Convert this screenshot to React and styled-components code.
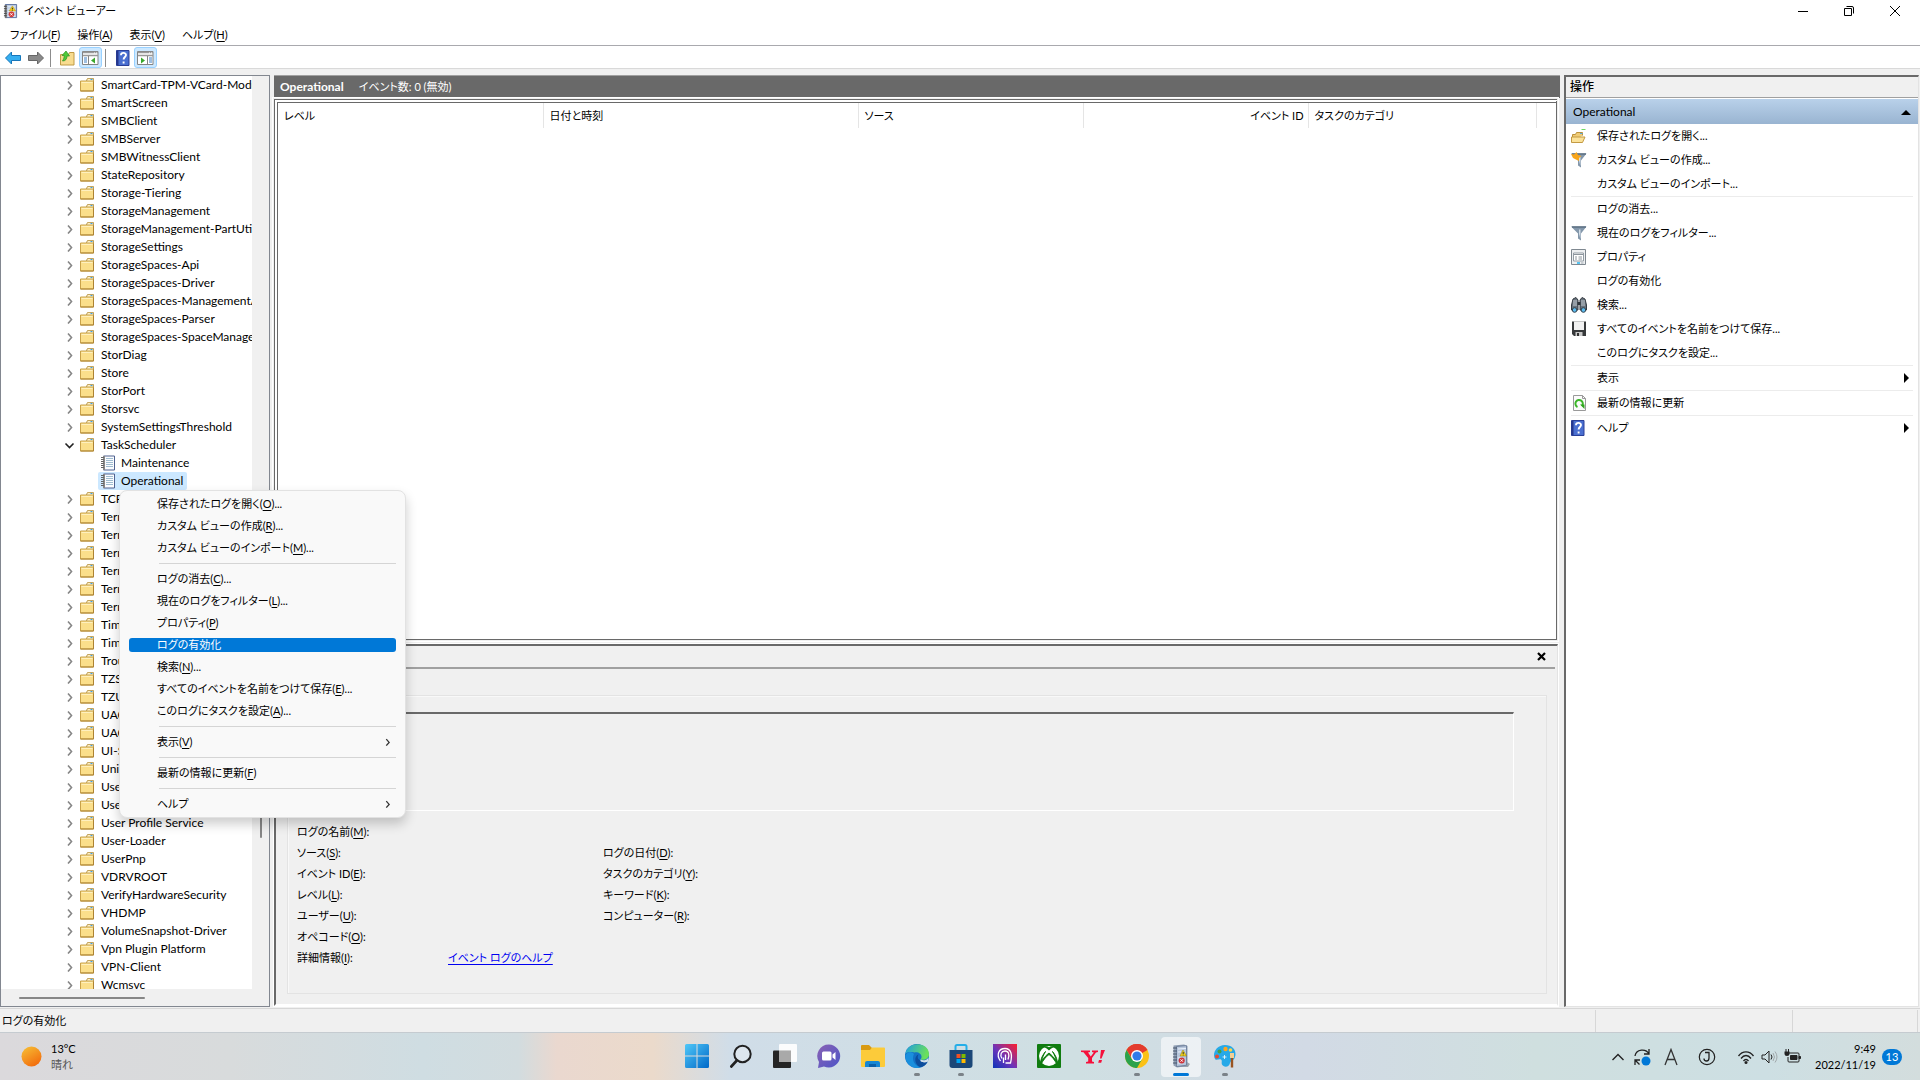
import React from "react";
import styled, { createGlobalStyle, css } from "styled-components";

const GlobalStyle = createGlobalStyle`
  * {
    box-sizing: border-box;
  }
  body {
    margin: 0;
    background: #f0f0f0;
    color: #000;
    font-family: Lato, "Noto Sans CJK JP", sans-serif;
    font-size: 11px;
    line-height: 18px;
    font-feature-settings: "palt";
    overflow: hidden;
  }
  button {
    font: inherit;
    font-feature-settings: inherit;
    color: inherit;
    background: none;
    border: 0;
    padding: 0;
    text-align: left;
    white-space: nowrap;
  }
  ul {
    margin: 0;
    padding: 0;
    list-style: none;
  }
  u {
    text-underline-offset: 2px;
  }
  svg {
    display: block;
    flex: none;
  }
`;

const AppStyle = styled.div`
  display: flex;
  flex-direction: column;
  height: 100vh;
`;

/* ---------- title, menu, toolbar ---------- */

const TitleBarStyle = styled.header`
  display: flex;
  align-items: center;
  gap: 6px;
  height: 22px;
  padding-left: 3px;
  background: #fff;
`;

const WindowButtonsStyle = styled.div`
  display: flex;
  margin-left: auto;
  padding-right: 2px;
`;

const WindowButtonStyle = styled.button`
  display: flex;
  align-items: center;
  justify-content: center;
  width: 46px;
  height: 20px;
`;

const MenuBarStyle = styled.nav`
  display: flex;
  gap: 17px;
  height: 24px;
  padding: 3px 10px 0;
  background: #fff;
  border-bottom: 1px solid #a9a9ae;
`;

const ToolbarStyle = styled.div`
  display: flex;
  align-items: center;
  height: 23px;
  padding: 1px 0 0 1px;
  background: #fff;
  border-bottom: 1px solid #d9d9d9;
`;

const ToolButtonStyle = styled.button`
  display: flex;
  align-items: center;
  justify-content: center;
  width: 23px;
  height: 21px;
  border: 1px solid ${(p) => (p.$on ? "#99d1ff" : "transparent")};
  border-radius: 3px;
  background: ${(p) => (p.$on ? "#cce8ff" : "none")};
`;

const ToolSepStyle = styled.span`
  width: 1px;
  height: 18px;
  margin: 0 5px 0 3px;
  background: #8c8c8c;
`;

/* ---------- three panes ---------- */

const PanesStyle = styled.main`
  flex: 1;
  min-height: 0;
  display: grid;
  grid-template-columns: 270px minmax(0, 1fr) 355px;
  gap: 4px;
  padding: 6px 1px 1px 0;
`;

const TreePaneStyle = styled.section`
  display: grid;
  grid-template-columns: minmax(0, 1fr) 17px;
  grid-template-rows: minmax(0, 1fr) 17px;
  min-height: 0;
  border: 1px solid #828790;
  background: #f0f0f0;
  font-size: 12px;
`;

const TreeStyle = styled.ul`
  overflow: hidden;
  background: #fff;
`;

const TreeItemStyle = styled.li`
  display: flex;
  align-items: center;
  height: 18px;
  padding-left: ${(p) => (p.$child ? 97 : 63)}px;
`;

const TreeButtonStyle = styled.button`
  display: flex;
  align-items: center;
  gap: ${(p) => (p.$child ? 6 : 7)}px;
  height: 18px;
  padding: 0 4px 0 ${(p) => (p.$child ? 3 : 5)}px;
  border-radius: 2px;
  background: ${(p) => (p.$selected ? "#cce8ff" : "none")};
`;

const VScrollStyle = styled.div`
  display: grid;
  grid-template-rows: 683fr 80fr 151fr;
  justify-content: center;
  &::before {
    content: "";
  }
`;

const HScrollStyle = styled.div`
  display: flex;
  align-items: center;
  padding-left: 18px;
`;

const ThumbStyle = styled.span`
  width: ${(p) => (p.$horizontal ? "54%" : "2px")};
  height: ${(p) => (p.$horizontal ? "2px" : "auto")};
  border-radius: 1px;
  background: #868686;
`;

const CenterPaneStyle = styled.section`
  display: flex;
  flex-direction: column;
  min-width: 0;
  min-height: 0;
`;

const LogHeaderStyle = styled.h1`
  display: flex;
  align-items: center;
  gap: 15px;
  height: 23px;
  margin: 0 0 1px;
  padding: 0 6px;
  border-top: 1px solid #a0a0a0;
  background: #696969;
  color: #fff;
  font-size: 12px;
  font-weight: 700;
  span {
    font-size: 11px;
    font-weight: 400;
  }
`;

const ListFrameStyle = styled.div`
  flex: 546;
  min-height: 0;
  margin-right: 3px;
  border: 4px double #696969;
  border-right: 1px solid #696969;
  border-bottom: 1px solid #696969;
  background: #fff;
  outline: 1px solid #fff;
  outline-offset: 1px;
`;

const EventTableStyle = styled.table`
  width: 100%;
  table-layout: fixed;
  border-collapse: collapse;
`;

const ColumnHeadStyle = styled.th`
  height: 25px;
  padding: 1px 4px 0 6px;
  border-right: 1px solid #e5e5e5;
  font-weight: 400;
  text-align: ${(p) => (p.$right ? "right" : "left")};
  white-space: nowrap;
  &:last-child {
    border: 0;
  }
`;

const PreviewStyle = styled.div`
  flex: 354;
  min-height: 0;
  display: flex;
  flex-direction: column;
  margin: 4px 2px 1px 0;
  padding: 0 2px 10px 0;
  border: 2px solid;
  border-color: #696969 #e3e3e3 #fff #696969;
  border-right-width: 1px;
  outline: 1px solid #fff;
`;

const PreviewHeadStyle = styled.div`
  display: flex;
  align-items: center;
  justify-content: flex-end;
  height: 23px;
  margin-bottom: 26px;
  padding-right: 9px;
  border-bottom: 2px solid #a0a0a0;
`;

const GroupStyle = styled.div`
  flex: 1;
  min-height: 0;
  margin: 0 8px 0 11px;
  padding: 16px 32px 0 9px;
  border: 1px solid #e3e3e3;
  box-shadow: inset 1px 1px #f8f8f8;
`;

const DescriptionStyle = styled.textarea`
  display: block;
  width: 100%;
  height: 99px;
  margin-bottom: 10px;
  resize: none;
  background: #f0f0f0;
  border: 1px solid;
  border-color: #696969 #fff #fff #696969;
  border-top-width: 2px;
`;

const FieldsStyle = styled.div`
  display: grid;
  grid-template-columns: 151px 155px 1fr;
  grid-auto-rows: 21px;
  align-items: center;
  a {
    color: #0000f0;
    text-underline-offset: 2px;
  }
`;

const ActionsPaneStyle = styled.aside`
  min-height: 0;
  border: 1px solid;
  border-width: 2px 1px 1px 2px;
  border-color: #696969 #e3e3e3 #e3e3e3 #696969;
  background: #fff;
`;

const ActionsTitleStyle = styled.h2`
  height: 21px;
  margin: 0 0 1px;
  padding: 0 4px;
  border-bottom: 1px solid #a0a0a0;
  background: #f0f0f0;
  font-size: 12px;
  line-height: 20px;
  font-weight: 500;
`;

const ActionsHeadStyle = styled.button`
  display: flex;
  align-items: center;
  justify-content: space-between;
  width: 100%;
  height: 25px;
  padding: 0 7px;
  background: linear-gradient(#b9d1ea, #99b4d1);
  font-size: 12px;
`;

const ActionStyle = styled.li`
  border-top: ${(p) => (p.$sep ? "1px solid #ececec" : "0")};
  margin: 0 5px;
  button {
    display: grid;
    grid-template-columns: 16px 1fr auto;
    gap: 10px;
    align-items: center;
    width: 100%;
    height: 24px;
    padding-right: 3px;
  }
`;

/* ---------- context menu ---------- */

const ContextMenuStyle = styled.ul`
  position: absolute;
  left: 119px;
  top: 490px;
  width: 287px;
  padding: 2px 9px 2px 9px;
  border: 1px solid #e2e2e2;
  border-radius: 8px;
  background: #f9f9f9;
  box-shadow: 0 6px 12px rgba(0, 0, 0, 0.2);
`;

const ContextItemStyle = styled.li`
  button {
    display: flex;
    align-items: center;
    justify-content: space-between;
    width: 100%;
    height: ${(p) => (p.$active ? 14 : 22)}px;
    margin: ${(p) => (p.$active ? 4 : 0)}px 0;
    padding: 0 4px 0 28px;
    border-radius: 3px;
    ${(p) =>
      p.$active &&
      css`
        background: #0078d7;
        color: #fff;
      `}
  }
`;

const ContextSepStyle = styled.li`
  height: 1px;
  margin: 4px 0 4px 30px;
  background: #d5d5d5;
`;

/* ---------- status bar, taskbar ---------- */

const StatusStyle = styled.footer`
  display: grid;
  grid-template-columns: 1fr 197px 125px 2px;
  height: 24px;
  padding: 1px 0;
  border-top: 1px solid #d7d7d7;
  span {
    padding: 2px;
    border-right: 1px solid #d7d7d7;
  }
  span:last-child {
    border: 0;
  }
`;

const TaskbarStyle = styled.div`
  display: grid;
  grid-template-columns: 1fr auto 1fr;
  align-items: center;
  height: 48px;
  border-top: 1px solid #c5cbd0;
  background: linear-gradient(
    90deg,
    #dbd9dc 0%,
    #d8dbdc 12%,
    #cfdde2 22%,
    #d2dcdf 27%,
    #ead8cf 29%,
    #ebdacb 34%,
    #d0dde8 38%,
    #cfdfe2 56%,
    #d2dae5 68%,
    #cfdfdf 80%,
    #cddfe3 92%,
    #d3dddd 100%
  );
`;

const WeatherStyle = styled.button`
  display: flex;
  align-items: center;
  gap: 9px;
  padding-left: 21px;
  line-height: 16px;
  span span {
    display: block;
    color: #555;
  }
`;

const AppsStyle = styled.div`
  display: flex;
  gap: 4px;
  padding-left: 1px;
`;

const AppButtonStyle = styled.button`
  display: flex;
  flex-direction: column;
  align-items: center;
  width: 40px;
  height: 40px;
  padding-top: 7px;
  border-radius: 4px;
  background: ${(p) => (p.$active ? "rgba(255, 255, 255, 0.6)" : "none")};
  &::after {
    content: "";
    width: ${(p) => (p.$active ? 16 : 6)}px;
    height: 3px;
    margin-top: 5px;
    border-radius: 2px;
    background: ${(p) =>
      p.$active ? "#0078d7" : p.$open ? "#7b8288" : "transparent"};
  }
`;

const TrayStyle = styled.div`
  display: flex;
  align-items: center;
  justify-content: flex-end;
  gap: 8px;
  padding-right: 18px;
`;

const TrayGroupStyle = styled.div`
  display: flex;
  gap: 6px;
`;

const ClockStyle = styled.time`
  margin-left: 6px;
  line-height: 16px;
  text-align: right;
  span {
    display: block;
  }
`;

const BadgeStyle = styled.span`
  min-width: 20px;
  height: 16px;
  margin-left: -2px;
  border-radius: 8px;
  background: #0078d7;
  color: #fff;
  line-height: 16px;
  text-align: center;
`;

/* ---------- icons ---------- */

const Svg = ({ w = 16, h = 16, box, children }) => (
  <svg width={w} height={h} viewBox={box || `0 0 ${w} ${h}`} fill="none" aria-hidden="true">
    {children}
  </svg>
);

const ViewerIcon = ({ size = 16 }) => (
  <Svg w={size} h={size} box="0 0 16 16">
    <path d="M2.5 .5h12v14h-12z" fill="#b9c9e0" stroke="#5a6fa0" />
    <path d="M5 3h8M5 5.5h8M5 8h8M5 10.500h8M5 13h8" stroke="#eaf1fa" />
    <path d="M3 1v14" stroke="#777" strokeWidth="2" />
    <path d="M1 2.500h3M1 5h3M1 7.500h3M1 10h3M1 12.500h3" stroke="#444" />
    <path d="M10 2l3.500 5.500h-7z" fill="#f7d31e" stroke="#b58b00" strokeWidth=".5" />
    <path d="M10 4v1.700M10 6.200v.8" stroke="#222" />
    <circle cx="9" cy="11" r="3" fill="#d23b3b" />
    <path d="M7.800 9.800l2.400 2.400m0-2.400l-2.400 2.400" stroke="#fff" />
  </Svg>
);

const FolderIcon = () => (
  <Svg w={14} h={15}>
    <path d="M.5 3h6l1-2h6v12H.5z" fill="#fbdf8b" stroke="#c9a24b" />
    <path d="M7.500 .5h6v2.500H6.500z" fill="#fff1c4" stroke="#b8954a" strokeWidth=".8" />
    <path d="M10.500 1h2v1h-2z" fill="#3f9fe0" />
    <path d="M1.500 4.500h11" stroke="#fff0bf" />
    <path d="M.5 13h13V3.500" stroke="#ad8333" />
  </Svg>
);

const LogIcon = () => (
  <Svg w={14} h={16}>
    <path d="M2.500 1h11v14h-11z" fill="#fafcff" stroke="#4f618f" />
    <path d="M5 3.500h7M5 5.500h7M5 7.500h7M5 9.500h7M5 11.500h7" stroke="#9fbccf" />
    <path d="M3 1v14" stroke="#888" strokeWidth="2" />
    <path d="M0 2.500h3M0 4.500h3M0 6.500h3M0 8.500h3M0 10.500h3M0 12.500h3" stroke="#666" />
  </Svg>
);

const Chevron = ({ dir = "right", color = "#868686", size = 5 }) => (
  <Svg w={size * 2 + 1} h={10} box="0 0 11 10">
    <path
      d={dir === "right" ? "M4 1.500l3.500 4L4 9.500" : "M1.500 3.500l4 4 4-4"}
      stroke={color}
      strokeWidth="1.600"
    />
  </Svg>
);

const HelpIcon = () => (
  <Svg w={14} h={16}>
    <path d="M.5 .5h12.500v15H.5z" fill="#4a6fd0" stroke="#2a3f98" />
    <path d="M1.500 1v14" stroke="#25378c" strokeWidth="2" />
    <path
      d="M5 5.200c0-3 5-3 5-.2 0 2-2.400 2-2.400 4.500M7.600 11.500v2"
      stroke="#fff"
      strokeWidth="1.900"
    />
  </Svg>
);

const Arrow = ({ flip, fill, stroke }) => (
  <Svg w={16} h={14}>
    <path
      d={flip ? "M15.500 7L9.500 1v3.500H.5v5h9V13z" : "M.5 7l6-6v3.500h9v5h-9V13z"}
      fill={fill}
      stroke={stroke}
    />
  </Svg>
);

const UpFolderIcon = () => (
  <Svg w={15} h={16}>
    <path d="M.5 4.500h8l1-2h4.500v12.500H.5z" fill="#f8dc90" stroke="#c09a45" />
    <path
      d="M2.500 11c3 0 4.500-2 4.500-5H9.500L6 1 2 5.500h2.200c0 2-.5 3.500-1.700 5.500z"
      fill="#4fca3a"
      stroke="#2c8f21"
      strokeWidth=".7"
    />
  </Svg>
);

const PaneIcon = ({ right }) => (
  <Svg w={17} h={14}>
    <path d="M.5 .5h15.500v13H.5z" fill="#fff" stroke="#848484" />
    <path d="M1 1.500h15M1 4.500h15" stroke="#999" strokeWidth="1.500" />
    <path d="M12 2h1M14 2h1" stroke="#fff" />
    {right ? (
      <>
        <path d="M10.500 5v8" stroke="#848484" />
        <path d="M12 7h3M12 9h3M12 11h3" stroke="#3f7ec2" />
        <path d="M4 6.500l4 3-4 3z" fill="#38a82c" />
      </>
    ) : (
      <>
        <path d="M6.500 5v8" stroke="#848484" />
        <path d="M2 7h3M2 9h3M2 11h3" stroke="#3f7ec2" />
        <path d="M13 6.500l-4 3 4 3z" fill="#38a82c" />
      </>
    )}
  </Svg>
);

const FunnelIcon = ({ star }) => (
  <Svg>
    <path d="M0 1.500h15.500L10 8.500v7l-3-2V8.500z" fill="#8397ab" />
    <path d="M1 2h14" stroke="#5d7183" strokeWidth="1.500" />
    <path d="M8 9V4.500h1.500V14z" fill="#d3dee8" />
    {star && <path d="M0 2l3 .5L5.500 0 7 3l3.500 1L8 6v3L5 7.500 2 6z" fill="#f8a51b" />}
  </Svg>
);

const OpenFolderIcon = () => (
  <Svg>
    <path d="M1.500 14V6.500h3l1-2h6v3" fill="#f0cc76" stroke="#bb913b" />
    <path d="M.5 14.500V9l2.500 0h11l-2.500 5.500z" fill="#fbe29a" stroke="#c39a43" />
    <path d="M10.500 1.500h4" stroke="#6fda64" />
    <path d="M9 5.500h2.500" stroke="#58a6d8" />
  </Svg>
);

const PropertiesIcon = () => (
  <Svg>
    <path d="M.5 .5h14v15H.5z" fill="#eef0f2" stroke="#7f8890" />
    <path d="M2.500 4h10v8h-10z" fill="#fff" stroke="#939ca4" />
    <path d="M3 5.500h9M4 8h2M7.500 8h3.500M4 10h2M7.500 10h3.500" stroke="#8b949c" />
    <path d="M6 14h3" stroke="#26b4ef" strokeWidth="1.500" />
    <path d="M10 14h2.500" stroke="#a3abb2" />
  </Svg>
);

const BinocularsIcon = () => (
  <Svg>
    <path d="M2 2l3-1.500L7 3v10H.5V8zM14 2l-3-1.500L9 3v10h6.500V8z" fill="#68727c" stroke="#343b42" />
    <path d="M3 3v6M5 3v6M11 3v6M13 3v6" stroke="#c3cbd2" />
    <path d="M6.500 5h3v3h-3z" fill="#2f363d" />
    <circle cx="3.600" cy="13" r="2.300" fill="#5bbcf0" stroke="#33424e" />
    <circle cx="12.400" cy="13" r="2.300" fill="#5bbcf0" stroke="#33424e" />
  </Svg>
);

const DiskIcon = () => (
  <Svg>
    <path d="M1 .5h14V15H3l-2-2z" fill="#37393b" />
    <path d="M3 .5h10V9H3z" fill="#f2f2f2" />
    <path d="M4.500 11h7v4h-7z" fill="#c8c8c8" />
    <path d="M6 12h2v3H6z" fill="#333" />
  </Svg>
);

const RefreshIcon = () => (
  <Svg>
    <path d="M2.500 .5h9l3 3v12h-12z" fill="#fbfbfb" stroke="#999" />
    <path d="M11.500 .5v3h3" stroke="#999" />
    <path d="M6.500 12A3.700 3.700 0 1 1 11 11" stroke="#3cb629" strokeWidth="2" />
    <path d="M9 9.500h4.500V14z" fill="#2fa31e" />
  </Svg>
);

const Triangle = ({ up }) => (
  <Svg w={up ? 10 : 6} h={up ? 6 : 10}>
    <path d={up ? "M0 6l5-5 5 5z" : "M0 0l5 5-5 5z"} fill="#000" />
  </Svg>
);

const StartIcon = () => (
  <Svg w={24} h={24}>
    <defs>
      <linearGradient id="start" x1="0" y1="0" x2="1" y2="1">
        <stop stopColor="#50c8f8" />
        <stop offset="1" stopColor="#0068c8" />
      </linearGradient>
    </defs>
    <path
      d="M1.500 0H11.500V11.500H0V1.500Q0 0 1.500 0zM12.500 0h10Q24 0 24 1.500v10H12.500zM0 12.500h11.500V24h-10Q0 24 0 22.500zM12.500 12.500H24v10Q24 24 22.500 24h-10z"
      fill="url(#start)"
    />
  </Svg>
);

const SearchIcon = () => (
  <Svg w={24} h={24}>
    <circle cx="13.500" cy="10" r="8.200" stroke="#222" strokeWidth="2" fill="#e6edf2" fillOpacity=".6" />
    <path d="M7.800 16.500l-5.500 6" stroke="#222" strokeWidth="2.600" strokeLinecap="round" />
  </Svg>
);

const TaskViewIcon = () => (
  <Svg w={24} h={24}>
    <rect x="0" y="6.500" width="18" height="17.500" rx="1" fill="#252525" />
    <rect x="6" y="0" width="18" height="18" rx="1" fill="#fff" fillOpacity=".9" />
    <path d="M6 6.500h12V18H6z" fill="#a9a9a9" />
  </Svg>
);

const ChatIcon = () => (
  <Svg w={24} h={24}>
    <defs>
      <linearGradient id="chat" x1="0" y1="0" x2="1" y2="1">
        <stop stopColor="#8a62b4" />
        <stop offset="1" stopColor="#4d55c8" />
      </linearGradient>
    </defs>
    <path d="M12 .5A11.500 11.500 0 1 1 7 22.500L1 24l1-6A11.500 11.500 0 0 1 12 .5z" fill="url(#chat)" />
    <rect x="5" y="7.500" width="9.500" height="9" rx="1.500" fill="#fff" />
    <path d="M15.500 10.500l3-2.500v8l-3-2.500z" fill="#fff" />
  </Svg>
);

const ExplorerIcon = () => (
  <Svg w={24} h={24}>
    <path d="M0 2Q0 1 1 1h7l3 3v4H0z" fill="#d99a12" />
    <path d="M0 6h9l2-2.500h12q1 0 1 1V22q0 1-1 1H1q-1 0-1-1z" fill="#fccb3a" />
    <path d="M4 23v-4q0-2 2-2h11q2 0 2 2v4z" fill="#1687d4" />
    <path d="M8 20h7v3H8z" fill="#0a5fa8" />
  </Svg>
);

const EdgeIcon = () => (
  <Svg w={24} h={24}>
    <defs>
      <linearGradient id="edge" x1="0" y1="0" x2="1" y2=".3">
        <stop stopColor="#1d9de2" />
        <stop offset="1" stopColor="#6be05a" />
      </linearGradient>
    </defs>
    <circle cx="12" cy="12" r="12" fill="#1270c4" />
    <path d="M.3 10C2-3 24-3 24 10.500c0 4-4 6-8.500 5 3-3.500-1-8-6-7C5 7.500 2 8 .3 10z" fill="url(#edge)" />
    <path d="M9 10c-3 6 1 12 7 13.500-9 2-16-4-15.700-12C3 6.500 7 7.500 9 10z" fill="#1a8fdd" />
    <path d="M13.500 10.500c-2 3.500 0 7.500 7.500 6.500l1.500 1C21 21 18 23 15 23c-6-3-6-11-1.500-12.500z" fill="#0c4d9d" />
    <path d="M15.500 15.500c2.500 1.500 6 1 8-2l-.5 4c-4 2-8.500.5-7.500-2z" fill="#d4e0e8" />
  </Svg>
);

const StoreIcon = () => (
  <Svg w={24} h={24}>
    <path d="M6.500 6V2.500Q6.500 1 8 1h8q1.500 0 1.500 1.500V6" stroke="#25aee8" strokeWidth="2" />
    <path d="M.5 6h23v15q0 3-3 3h-17q-3 0-3-3z" fill="#1b4778" />
    <path d="M7.500 10h4v4h-4z" fill="#f25022" />
    <path d="M12.500 10h4v4h-4z" fill="#7fba00" />
    <path d="M7.500 15h4v4h-4z" fill="#00a4ef" />
    <path d="M12.500 15h4v4h-4z" fill="#ffb900" />
  </Svg>
);

const HeadIcon = () => (
  <Svg w={24} h={24}>
    <defs>
      <linearGradient id="head" x1="0" y1="1" x2="1" y2="0">
        <stop stopColor="#0b34b8" />
        <stop offset=".45" stopColor="#6b35bb" />
        <stop offset="1" stopColor="#ff1f2d" />
      </linearGradient>
    </defs>
    <path d="M0 0h24v24H0z" fill="url(#head)" />
    <path
      d="M7.500 17C3 11 5.500 4.500 12 4.500S19.500 11 17.500 19h-5M9 14.500C6.500 10.500 8.500 7 12 7s5 3.500 3 8.500M10.500 19v-5.500M12.500 16v-5.500"
      stroke="#fff"
      strokeWidth="1.300"
    />
  </Svg>
);

const XboxIcon = () => (
  <Svg w={24} h={24}>
    <rect width="24" height="24" rx="1" fill="#107c10" />
    <circle cx="12" cy="12" r="10" fill="#fff" />
    <path d="M12 6.500C9 3.500 7 3 5 3.500 8 1.500 10 2 12 3.200 14 2 16 1.500 19 3.500 17 3 15 3.500 12 6.500z" fill="#107c10" />
    <path
      d="M8.500 7.500C4.500 12.500 3 17 4.500 19.500 6 16.500 9 12.500 12 10.500c3 2 6 6 7.500 9 1.500-2.500 0-7-4-12 3 5 3.500 8 3.500 9-2-3-4.500-5.500-7-7.500-2.500 2-5 4.500-7 7.500 0-1 .5-4 3.500-9z"
      fill="#107c10"
      stroke="#107c10"
    />
  </Svg>
);

const YahooIcon = () => (
  <Svg w={24} h={24}>
    <path
      d="M0 6.500h9v1.500l-2 .4 2.800 4.200 3-4-1.800-.6V6.500h6V8l-2 .5-4 5.500v3.500l2 .5v1.500H5V18l2.200-.5V14L2.500 8.300 0 8zM20 6h4l-3.500 8.500h-1.500zM18 16h3l-.8 2.800h-3z"
      fill="#f5103b"
    />
  </Svg>
);

const ChromeIcon = () => (
  <Svg w={24} h={24}>
    <circle cx="12" cy="12" r="12" fill="#fbc116" />
    <path d="M12 12L1.600 6A12 12 0 0 1 22.400 6z" fill="#e33b2e" />
    <path d="M12 6h10.400A12 12 0 0 0 1.600 6L7 15z" fill="#e33b2e" />
    <path d="M1.600 6L6.800 15 12 18l-.5 6A12 12 0 0 1 1.600 6z" fill="#2ba24c" />
    <path d="M17.200 15L12 24a12 12 0 0 1-2-.2L12 17z" fill="#2ba24c" />
    <circle cx="12" cy="12" r="6" fill="#fff" />
    <circle cx="12" cy="12" r="4.600" fill="#2f7bea" />
  </Svg>
);

const ViewerAppIcon = () => (
  <Svg w={24} h={24}>
    <path d="M6 23l13 0 2-3-3-2z" fill="#9ea4aa" />
    <path d="M4.500 1.500L15 .5l3.500 1.500V22l-10.500 1.500-3.500-2z" fill="#8e9db2" />
    <path d="M7.500 2.500l10-.8v19.500l-10 1.300z" fill="#b8c7dc" stroke="#5f718e" strokeWidth=".7" />
    <path d="M9 5l8-.6M9 8l3-.2M9 14l4-.2M9 19l4-.2" stroke="#eaf1fa" />
    <path d="M4 4h4M4 7h4M4 10h4M4 13h4M4 16h4M4 19h4" stroke="#48566c" />
    <path d="M14 6l3.500 6h-6.500z" fill="#f4d41b" stroke="#9b7d00" strokeWidth=".5" />
    <path d="M14.200 8v2M14.200 10.600v.8" stroke="#333" />
    <circle cx="12.700" cy="16.500" r="3" fill="#cf3338" />
    <path d="M11.500 15.300l2.400 2.400m0-2.400l-2.400 2.400" stroke="#fff" />
  </Svg>
);

const PaintIcon = () => (
  <Svg w={24} h={24}>
    <path
      d="M2 15C-1 10 3 1 12 1c8 0 12 6 10 12-1 4-4 3-5 6-.5 3-4 5-6.500 3C7 20 10 17 8 15.500 6 14.500 3.500 17 2 15z"
      fill="#27a9e8"
    />
    <circle cx="12.500" cy="5" r="2.200" fill="#ffa51f" />
    <circle cx="6.500" cy="7.500" r="2" fill="#43a047" />
    <circle cx="4" cy="12.500" r="2" fill="#e54b2e" />
    <circle cx="17.500" cy="6" r="1.800" fill="#fcd54a" />
    <path d="M17 9h4v5h-4z" fill="#f1cf95" />
    <path d="M17.800 14h2.400v9.500h-2.400z" fill="#995421" />
    <path d="M11.500 11v4M9.500 13h4" stroke="#fff" strokeWidth=".8" />
  </Svg>
);

const SunIcon = () => (
  <Svg w={21} h={21}>
    <defs>
      <linearGradient id="sun" x1=".2" y1="0" x2=".8" y2="1">
        <stop stopColor="#f6bb33" />
        <stop offset="1" stopColor="#f2670b" />
      </linearGradient>
    </defs>
    <circle cx="10.500" cy="10.500" r="10" fill="url(#sun)" />
  </Svg>
);

/* ---------- data ---------- */

const TREE_ITEMS = [
  "SmartCard-TPM-VCard-Module",
  "SmartScreen",
  "SMBClient",
  "SMBServer",
  "SMBWitnessClient",
  "StateRepository",
  "Storage-Tiering",
  "StorageManagement",
  "StorageManagement-PartUtil",
  "StorageSettings",
  "StorageSpaces-Api",
  "StorageSpaces-Driver",
  "StorageSpaces-ManagementAgent",
  "StorageSpaces-Parser",
  "StorageSpaces-SpaceManager",
  "StorDiag",
  "Store",
  "StorPort",
  "Storsvc",
  "SystemSettingsThreshold",
  { name: "TaskScheduler", open: true },
  { name: "Maintenance", child: true },
  { name: "Operational", child: true, selected: true },
  "TCPIP",
  "TerminalServices-ClientActiveXCore",
  "TerminalServices-ClientUSBDevices",
  "TerminalServices-LocalSessionManager",
  "TerminalServices-PnPDevices",
  "TerminalServices-Printers",
  "TerminalServices-RemoteConnectionManager",
  "Time-Service",
  "Time-Service-PTP-Provider",
  "Troubleshooting-Recommended",
  "TZSync",
  "TZUtil",
  "UAC",
  "UAC-FileVirtualization",
  "UI-Search",
  "UniversalTelemetryClient",
  "User Control Panel",
  "User Device Registration",
  "User Profile Service",
  "User-Loader",
  "UserPnp",
  "VDRVROOT",
  "VerifyHardwareSecurity",
  "VHDMP",
  "VolumeSnapshot-Driver",
  "Vpn Plugin Platform",
  "VPN-Client",
  "Wcmsvc",
].map((item) => (typeof item === "string" ? { name: item } : item));

const MENUS = [
  ["ファイル", "F"],
  ["操作", "A"],
  ["表示", "V"],
  ["ヘルプ", "H"],
];

const COLUMNS = [
  { name: "レベル", width: 265 },
  { name: "日付と時刻", width: 315 },
  { name: "ソース", width: 225 },
  { name: "イベント ID", width: 225, right: true },
  { name: "タスクのカテゴリ", width: 228 },
  { name: "" },
];

const ACTIONS = [
  { name: "保存されたログを開く...", icon: <OpenFolderIcon /> },
  { name: "カスタム ビューの作成...", icon: <FunnelIcon star /> },
  { name: "カスタム ビューのインポート..." },
  { name: "ログの消去...", sep: true },
  { name: "現在のログをフィルター...", icon: <FunnelIcon /> },
  { name: "プロパティ", icon: <PropertiesIcon /> },
  { name: "ログの有効化" },
  { name: "検索...", icon: <BinocularsIcon /> },
  { name: "すべてのイベントを名前をつけて保存...", icon: <DiskIcon /> },
  { name: "このログにタスクを設定..." },
  { name: "表示", sep: true, more: true },
  { name: "最新の情報に更新", sep: true, icon: <RefreshIcon /> },
  { name: "ヘルプ", sep: true, more: true, icon: <HelpIcon /> },
];

const CONTEXT_ITEMS = [
  { name: "保存されたログを開く", hotkey: "O", dots: true },
  { name: "カスタム ビューの作成", hotkey: "R", dots: true },
  { name: "カスタム ビューのインポート", hotkey: "M", dots: true },
  { sep: true },
  { name: "ログの消去", hotkey: "C", dots: true },
  { name: "現在のログをフィルター", hotkey: "L", dots: true },
  { name: "プロパティ", hotkey: "P" },
  { name: "ログの有効化", active: true },
  { name: "検索", hotkey: "N", dots: true },
  { name: "すべてのイベントを名前をつけて保存", hotkey: "E", dots: true },
  { name: "このログにタスクを設定", hotkey: "A", dots: true },
  { sep: true },
  { name: "表示", hotkey: "V", more: true },
  { sep: true },
  { name: "最新の情報に更新", hotkey: "F" },
  { sep: true },
  { name: "ヘルプ", more: true },
];

const FIELDS = [
  [["ログの名前", "M"]],
  [["ソース", "S"], ["ログの日付", "D"]],
  [["イベント ID", "E"], ["タスクのカテゴリ", "Y"]],
  [["レベル", "L"], ["キーワード", "K"]],
  [["ユーザー", "U"], ["コンピューター", "R"]],
  [["オペコード", "O"]],
  [["詳細情報", "I"]],
];

const APPS = [
  { name: "スタート", icon: <StartIcon /> },
  { name: "検索", icon: <SearchIcon /> },
  { name: "タスク ビュー", icon: <TaskViewIcon /> },
  { name: "チャット", icon: <ChatIcon /> },
  { name: "エクスプローラー", icon: <ExplorerIcon /> },
  { name: "Edge", icon: <EdgeIcon />, open: true },
  { name: "Store", icon: <StoreIcon />, open: true },
  { name: "アシスタント", icon: <HeadIcon /> },
  { name: "Xbox", icon: <XboxIcon /> },
  { name: "Yahoo", icon: <YahooIcon /> },
  { name: "Chrome", icon: <ChromeIcon />, open: true },
  { name: "イベント ビューアー", icon: <ViewerAppIcon />, active: true },
  { name: "ペイント", icon: <PaintIcon />, open: true },
];

/* ---------- components ---------- */

const HotLabel = ({ name, hotkey, after }) => (
  <span>
    {name}
    {hotkey && (
      <>
        (<u>{hotkey}</u>)
      </>
    )}
    {after}
  </span>
);

const TopBars = () => (
  <>
    <TitleBarStyle>
      <ViewerIcon size={15} />
      <span>イベント ビューアー</span>
      <WindowButtonsStyle>
        <WindowButtonStyle aria-label="最小化">
          <Svg w={10} h={10}>
            <path d="M0 5.500h10" stroke="#000" />
          </Svg>
        </WindowButtonStyle>
        <WindowButtonStyle aria-label="元に戻す">
          <Svg w={10} h={10}>
            <path d="M.5 2.500h7v7h-7zM2.500 .5H8q1.500 0 1.500 1.500v5.500" stroke="#000" />
          </Svg>
        </WindowButtonStyle>
        <WindowButtonStyle aria-label="閉じる">
          <Svg w={10} h={10}>
            <path d="M0 0l10 10M10 0L0 10" stroke="#000" />
          </Svg>
        </WindowButtonStyle>
      </WindowButtonsStyle>
    </TitleBarStyle>
    <MenuBarStyle>
      {MENUS.map(([name, hotkey]) => (
        <button key={hotkey}>
          <HotLabel name={name} hotkey={hotkey} />
        </button>
      ))}
    </MenuBarStyle>
    <ToolbarStyle>
      <ToolButtonStyle aria-label="戻る">
        <Arrow fill="#35aef0" stroke="#1676ba" />
      </ToolButtonStyle>
      <ToolButtonStyle aria-label="進む">
        <Arrow flip fill="#8a8a8a" stroke="#666" />
      </ToolButtonStyle>
      <ToolSepStyle />
      <ToolButtonStyle aria-label="上へ">
        <UpFolderIcon />
      </ToolButtonStyle>
      <ToolButtonStyle $on aria-label="ツリーの表示">
        <PaneIcon />
      </ToolButtonStyle>
      <ToolSepStyle />
      <ToolButtonStyle aria-label="ヘルプ">
        <HelpIcon />
      </ToolButtonStyle>
      <ToolButtonStyle $on aria-label="操作ウィンドウの表示">
        <PaneIcon right />
      </ToolButtonStyle>
    </ToolbarStyle>
  </>
);

const TreePane = () => (
  <TreePaneStyle>
    <TreeStyle>
      {TREE_ITEMS.map((item) => (
        <TreeItemStyle key={item.name} $child={item.child}>
          {!item.child && (
            <Chevron dir={item.open ? "down" : "right"} color={item.open ? "#222" : undefined} />
          )}
          <TreeButtonStyle $child={item.child} $selected={item.selected}>
            {item.child ? <LogIcon /> : <FolderIcon />}
            {item.name}
          </TreeButtonStyle>
        </TreeItemStyle>
      ))}
    </TreeStyle>
    <VScrollStyle>
      <ThumbStyle />
    </VScrollStyle>
    <HScrollStyle>
      <ThumbStyle $horizontal />
    </HScrollStyle>
  </TreePaneStyle>
);

const CenterPane = () => (
  <CenterPaneStyle>
    <LogHeaderStyle>
      Operational <span>イベント数: 0 (無効)</span>
    </LogHeaderStyle>
    <ListFrameStyle>
      <EventTableStyle>
        <colgroup>
          {COLUMNS.map((col) => (
            <col key={col.name} width={col.width} />
          ))}
        </colgroup>
        <thead>
          <tr>
            {COLUMNS.map((col) => (
              <ColumnHeadStyle key={col.name} $right={col.right}>
                {col.name}
              </ColumnHeadStyle>
            ))}
          </tr>
        </thead>
      </EventTableStyle>
    </ListFrameStyle>
    <PreviewStyle>
      <PreviewHeadStyle>
        <button aria-label="プレビューを閉じる">
          <Svg w={9} h={9}>
            <path d="M1 1l7 7M8 1L1 8" stroke="#000" strokeWidth="2.200" />
          </Svg>
        </button>
      </PreviewHeadStyle>
      <GroupStyle>
        <DescriptionStyle readOnly aria-label="説明" />
        <FieldsStyle>
          {FIELDS.map(([[name, hotkey], second]) => (
            <React.Fragment key={name}>
              <HotLabel name={name} hotkey={hotkey} after=":" />
              {hotkey === "I" ? <a href="#help">イベント ログのヘルプ</a> : <span />}
              {second ? <HotLabel name={second[0]} hotkey={second[1]} after=":" /> : <span />}
            </React.Fragment>
          ))}
        </FieldsStyle>
      </GroupStyle>
    </PreviewStyle>
  </CenterPaneStyle>
);

const ActionsPane = () => (
  <ActionsPaneStyle>
    <ActionsTitleStyle>操作</ActionsTitleStyle>
    <ActionsHeadStyle>
      Operational
      <Triangle up />
    </ActionsHeadStyle>
    <ul>
      {ACTIONS.map((action) => (
        <ActionStyle key={action.name} $sep={action.sep}>
          <button>
            {action.icon || <span />}
            <span>{action.name}</span>
            {action.more && <Triangle />}
          </button>
        </ActionStyle>
      ))}
    </ul>
  </ActionsPaneStyle>
);

const ContextMenu = () => (
  <ContextMenuStyle>
    {CONTEXT_ITEMS.map((item, i) =>
      item.sep ? (
        <ContextSepStyle key={i} />
      ) : (
        <ContextItemStyle key={i} $active={item.active}>
          <button>
            <HotLabel name={item.name} hotkey={item.hotkey} after={item.dots && "..."} />
            {item.more && <Chevron color="#333" size={4} />}
          </button>
        </ContextItemStyle>
      )
    )}
  </ContextMenuStyle>
);

const Tray = () => (
  <TrayStyle>
    <Svg w={14} h={10}>
      <path d="M1.500 8L7 2.500 12.500 8" stroke="#222" strokeWidth="1.400" />
    </Svg>
    <Svg w={18} h={18}>
      <path
        d="M2 8C3 1 13 0 16 6M16 1v5h-5M2 17v-5h5M2.500 12.500l4 4"
        stroke="#222"
        strokeWidth="1.300"
      />
      <circle cx="13" cy="13" r="4.500" fill="#0078d7" />
    </Svg>
    <Svg w={24} h={18}>
      <path d="M6 17L12 1.500 18 17M8 11.500h8" stroke="#333" strokeWidth="1.300" />
    </Svg>
    <Svg w={38} h={18}>
      <circle cx="16" cy="9" r="7.700" stroke="#222" strokeWidth="1.200" />
      <path d="M14 4.500h4V10q0 3-2.500 3T13 10.500" stroke="#222" strokeWidth="1.300" />
    </Svg>
    <TrayGroupStyle>
      <Svg w={18} h={16}>
        <path
          d="M1.500 7c4-5.500 11-5.500 15 0M4 9.500c3-4 7-4 10 0M6.500 12c1.500-2 3.500-2 5 0"
          stroke="#222"
          strokeWidth="1.300"
        />
        <circle cx="9" cy="13.500" r="1.500" fill="#222" />
      </Svg>
      <Svg w={17} h={16}>
        <path d="M1 6h3l4-4v12l-4-4H1zM10 5.500q2 2.500 0 5" stroke="#222" />
        <path d="M12 4q3 4 0 8M14 2.500q4 5.500 0 11" stroke="#a2a9ab" />
      </Svg>
      <Svg w={17} h={16}>
        <path d="M5 4h9q1 0 1 1v7q0 1-1 1H5q-1 0-1-1V8" stroke="#222" />
        <path d="M6.500 6.500h6.500v4h-6.500zM15 7.500h1.500v2H15z" fill="#222" stroke="#222" />
        <path d="M.5 2.500h5V5Q5.500 7 3 7T.5 5zM1.500 0h1v3h-1zM4 0h1v3H4z" fill="#222" />
      </Svg>
    </TrayGroupStyle>
    <ClockStyle>
      <span>9:49</span>
      <span>2022/11/19</span>
    </ClockStyle>
    <BadgeStyle>13</BadgeStyle>
  </TrayStyle>
);

const App = () => {
  return (
    <AppStyle>
      <GlobalStyle />
      <TopBars />
      <PanesStyle>
        <TreePane />
        <CenterPane />
        <ActionsPane />
      </PanesStyle>
      <StatusStyle>
        <span>ログの有効化</span>
        <span />
        <span />
        <span />
      </StatusStyle>
      <TaskbarStyle>
        <WeatherStyle>
          <SunIcon />
          <span>
            13°C
            <span>晴れ</span>
          </span>
        </WeatherStyle>
        <AppsStyle>
          {APPS.map((app) => (
            <AppButtonStyle key={app.name} aria-label={app.name} $open={app.open} $active={app.active}>
              {app.icon}
            </AppButtonStyle>
          ))}
        </AppsStyle>
        <Tray />
      </TaskbarStyle>
      <ContextMenu />
    </AppStyle>
  );
};

export default App;
